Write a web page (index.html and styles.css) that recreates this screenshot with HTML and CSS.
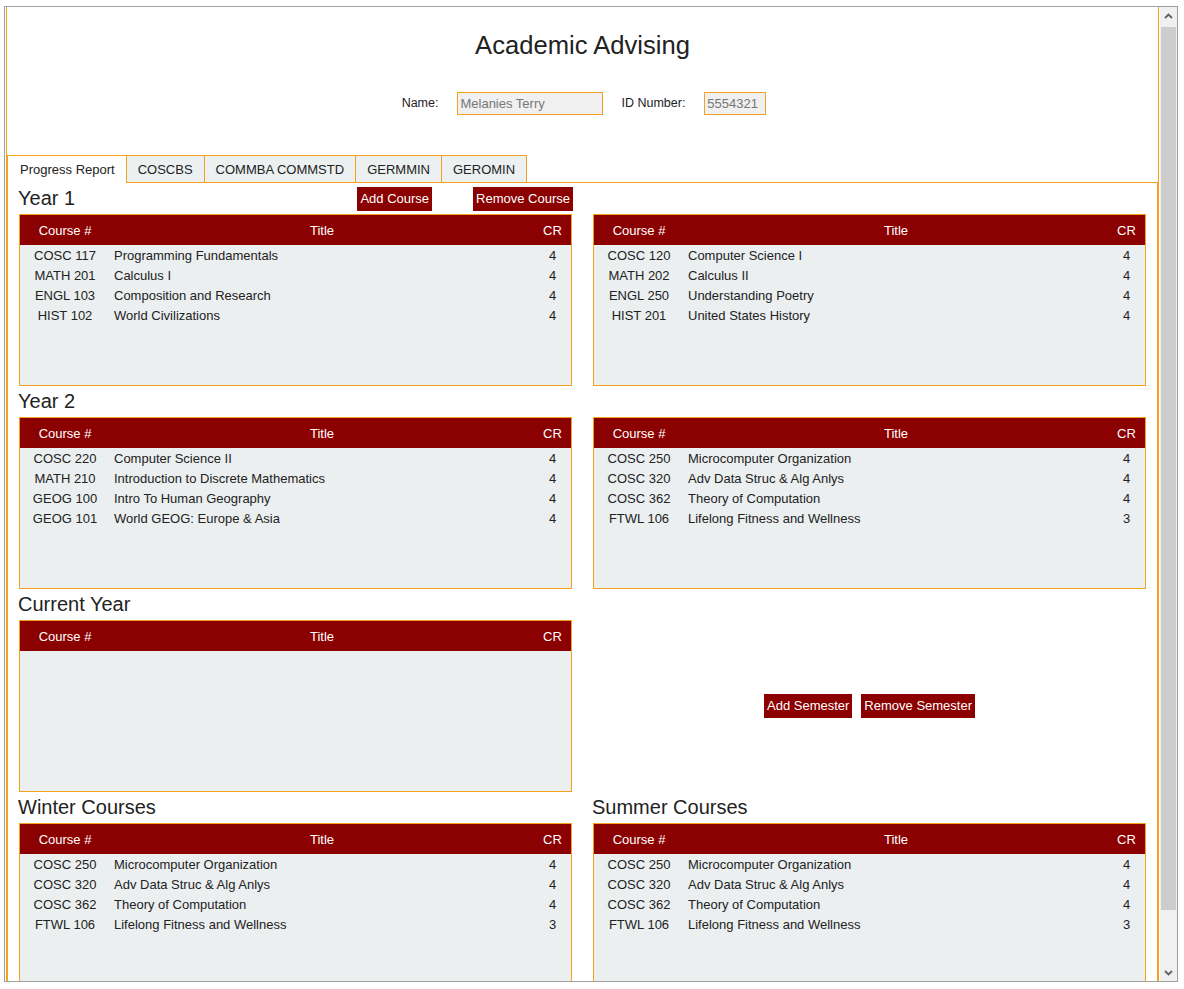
FILE: index.html
```html
<!DOCTYPE html>
<html lang="en">
<head>
<meta charset="utf-8">
<title>Academic Advising</title>
<link rel="stylesheet" href="styles.css">
</head>
<body>
<div class="frame">
  <div class="viewport">
    <div class="page">
      <h1 class="title">Academic Advising</h1>
      <div class="student">
        <span class="lbl">Name:</span>
        <input class="field field-name" type="text" value="Melanies Terry" readonly>
        <span class="lbl">ID Number:</span>
        <input class="field field-id" type="text" value="5554321" readonly>
      </div>
      <div class="tabs">
        <div class="tab active">Progress Report</div>
        <div class="tab">COSCBS</div>
        <div class="tab">COMMBA COMMSTD</div>
        <div class="tab">GERMMIN</div>
        <div class="tab">GEROMIN</div>
      </div>
      <div class="panel">
        <div class="grid">
          <!-- Year 1 -->
          <div class="cell">
            <div class="head-row">
              <h2 class="sec">Year 1</h2>
              <div class="actions">
                <span class="btn">Add Course</span>
                <span class="btn btn-far">Remove Course</span>
              </div>
            </div>
            <div class="ctable">
              <div class="thead"><span>Course #</span><span>Title</span><span>CR</span></div>
              <div class="row"><span class="c">COSC 117</span><span class="t">Programming Fundamentals</span><span class="cr">4</span></div>
              <div class="row"><span class="c">MATH 201</span><span class="t">Calculus I</span><span class="cr">4</span></div>
              <div class="row"><span class="c">ENGL 103</span><span class="t">Composition and Research</span><span class="cr">4</span></div>
              <div class="row"><span class="c">HIST 102</span><span class="t">World Civilizations</span><span class="cr">4</span></div>
            </div>
          </div>
          <div class="cell">
            <div class="head-row"></div>
            <div class="ctable">
              <div class="thead"><span>Course #</span><span>Title</span><span>CR</span></div>
              <div class="row"><span class="c">COSC 120</span><span class="t">Computer Science I</span><span class="cr">4</span></div>
              <div class="row"><span class="c">MATH 202</span><span class="t">Calculus II</span><span class="cr">4</span></div>
              <div class="row"><span class="c">ENGL 250</span><span class="t">Understanding Poetry</span><span class="cr">4</span></div>
              <div class="row"><span class="c">HIST 201</span><span class="t">United States History</span><span class="cr">4</span></div>
            </div>
          </div>
          <!-- Year 2 -->
          <div class="cell">
            <div class="head-row"><h2 class="sec">Year 2</h2></div>
            <div class="ctable">
              <div class="thead"><span>Course #</span><span>Title</span><span>CR</span></div>
              <div class="row"><span class="c">COSC 220</span><span class="t">Computer Science II</span><span class="cr">4</span></div>
              <div class="row"><span class="c">MATH 210</span><span class="t">Introduction to Discrete Mathematics</span><span class="cr">4</span></div>
              <div class="row"><span class="c">GEOG 100</span><span class="t">Intro To Human Geography</span><span class="cr">4</span></div>
              <div class="row"><span class="c">GEOG 101</span><span class="t">World GEOG: Europe &amp; Asia</span><span class="cr">4</span></div>
            </div>
          </div>
          <div class="cell">
            <div class="head-row"></div>
            <div class="ctable">
              <div class="thead"><span>Course #</span><span>Title</span><span>CR</span></div>
              <div class="row"><span class="c">COSC 250</span><span class="t">Microcomputer Organization</span><span class="cr">4</span></div>
              <div class="row"><span class="c">COSC 320</span><span class="t">Adv Data Struc &amp; Alg Anlys</span><span class="cr">4</span></div>
              <div class="row"><span class="c">COSC 362</span><span class="t">Theory of Computation</span><span class="cr">4</span></div>
              <div class="row"><span class="c">FTWL 106</span><span class="t">Lifelong Fitness and Wellness</span><span class="cr">3</span></div>
            </div>
          </div>
          <!-- Current Year -->
          <div class="cell">
            <div class="head-row"><h2 class="sec">Current Year</h2></div>
            <div class="ctable">
              <div class="thead"><span>Course #</span><span>Title</span><span>CR</span></div>
            </div>
          </div>
          <div class="cell">
            <div class="head-row"></div>
            <div class="sem-actions">
              <span class="btn">Add Semester</span>
              <span class="btn">Remove Semester</span>
            </div>
          </div>
          <!-- Winter / Summer -->
          <div class="cell">
            <div class="head-row"><h2 class="sec">Winter Courses</h2></div>
            <div class="ctable">
              <div class="thead"><span>Course #</span><span>Title</span><span>CR</span></div>
              <div class="row"><span class="c">COSC 250</span><span class="t">Microcomputer Organization</span><span class="cr">4</span></div>
              <div class="row"><span class="c">COSC 320</span><span class="t">Adv Data Struc &amp; Alg Anlys</span><span class="cr">4</span></div>
              <div class="row"><span class="c">COSC 362</span><span class="t">Theory of Computation</span><span class="cr">4</span></div>
              <div class="row"><span class="c">FTWL 106</span><span class="t">Lifelong Fitness and Wellness</span><span class="cr">3</span></div>
            </div>
          </div>
          <div class="cell">
            <div class="head-row"><h2 class="sec">Summer Courses</h2></div>
            <div class="ctable">
              <div class="thead"><span>Course #</span><span>Title</span><span>CR</span></div>
              <div class="row"><span class="c">COSC 250</span><span class="t">Microcomputer Organization</span><span class="cr">4</span></div>
              <div class="row"><span class="c">COSC 320</span><span class="t">Adv Data Struc &amp; Alg Anlys</span><span class="cr">4</span></div>
              <div class="row"><span class="c">COSC 362</span><span class="t">Theory of Computation</span><span class="cr">4</span></div>
              <div class="row"><span class="c">FTWL 106</span><span class="t">Lifelong Fitness and Wellness</span><span class="cr">3</span></div>
            </div>
          </div>
        </div>
      </div>
    </div>
  </div>
  <div class="scrollbar">
    <div class="arrow">
      <svg width="9" height="6" viewBox="0 0 9 6"><path d="M1 5 L4.5 1.5 L8 5" fill="none" stroke="#606060" stroke-width="1.8"/></svg>
    </div>
    <div class="track"><div class="thumb"></div></div>
    <div class="arrow">
      <svg width="9" height="6" viewBox="0 0 9 6"><path d="M1 1 L4.5 4.5 L8 1" fill="none" stroke="#606060" stroke-width="1.8"/></svg>
    </div>
  </div>
</div>
</body>
</html>
```
FILE: styles.css
```css
html, body {
  margin: 0;
  padding: 0;
  background: #fff;
}

body {
  font-family: "Liberation Sans", Arial, sans-serif;
  color: #222;
  font-size: 13px;
}

.frame {
  box-sizing: border-box;
  margin: 6px 0 0 4px;
  width: 1174px;
  height: 976px;
  border: 1px solid #a0a0a0;
  display: flex;
  overflow: hidden;
  box-shadow: 0 1px 0 #dcdcdc;
}

.viewport {
  flex: 1;
  overflow: hidden;
  background: #fff;
}

.page {
  margin: 0 1px;
  border-left: 1px solid #f3a21f;
  border-right: 1px solid #f3a21f;
  min-height: 1100px;
}

.title {
  margin: 0;
  padding-top: 23px;
  font-size: 25.6px;
  line-height: 30px;
  font-weight: normal;
  text-align: center;
  color: #222;
}

.student {
  margin-top: 32px;
  padding-left: 3px;
  height: 22px;
  display: flex;
  justify-content: center;
  align-items: center;
  font-size: 12.5px;
}

.lbl {
  margin-right: 19px;
}

.field {
  box-sizing: border-box;
  height: 23px;
  margin: 0 18px 0 0;
  padding: 0 2px;
  border: 1px solid #f3a21f;
  background: #f0f0f0;
  color: #777;
  font-family: "Liberation Sans", Arial, sans-serif;
  font-size: 13px;
  outline: none;
}

.field-name { width: 146px; }
.field-id { width: 62px; margin-right: 0; }

.tabs {
  margin-top: 41px;
  display: flex;
  align-items: flex-start;
  height: 27px;
}

.tab {
  box-sizing: border-box;
  height: 27px;
  padding: 1px 11px 0 11px;
  line-height: 26px;
  border-top: 1px solid #f3a21f;
  border-right: 1px solid #f3a21f;
  background: #ecf0f1;
  color: #222;
  white-space: nowrap;
}

.tab:first-child {
  border-left: 1px solid #f3a21f;
  padding-left: 12px;
}

.tab.active {
  position: relative;
  height: 28px;
  background: #fff;
}

.panel {
  border: 1px solid #f3a21f;
  border-bottom: none;
  padding: 0 11px;
}

.grid {
  display: grid;
  grid-template-columns: 553px 553px;
  column-gap: 21px;
}

.head-row {
  height: 31px;
  display: flex;
  align-items: center;
}

.sec {
  margin: 0 0 0 -1px;
  font-size: 20px;
  font-weight: normal;
  line-height: 31px;
  color: #222;
}

.actions {
  margin-left: auto;
  display: flex;
  margin-right: -1px;
}

.btn {
  display: inline-block;
  height: 24px;
  line-height: 24px;
  padding: 0 3px;
  background: #8b0000;
  color: #fff;
  white-space: nowrap;
}

.btn-far {
  margin-left: 41px;
}

.ctable {
  box-sizing: border-box;
  height: 172px;
  border: 1px solid #f3a21f;
  background: #ebeff0;
}

.thead,
.row {
  display: grid;
  grid-template-columns: 90px 1fr 37px;
}

.thead {
  box-sizing: border-box;
  height: 30px;
  padding-top: 1px;
  line-height: 29px;
  margin-bottom: 1px;
  background: #8b0000;
  color: #fff;
  text-align: center;
}

.row {
  height: 20px;
  line-height: 20px;
  color: #222;
}

.row .c { text-align: center; }
.row .t { padding-left: 4px; white-space: nowrap; }
.row .cr { text-align: center; }

.sem-actions {
  height: 172px;
  display: flex;
  justify-content: center;
  align-items: center;
  gap: 9px;
}

.scrollbar {
  width: 17px;
  background: #f0f0f0;
  display: flex;
  flex-direction: column;
}

.arrow {
  height: 17px;
  display: flex;
  align-items: center;
  justify-content: center;
}

.track {
  flex: 1;
  padding: 3px 1px 0 1px;
}

.thumb {
  height: 883px;
  background: #cdcdcd;
}
```
